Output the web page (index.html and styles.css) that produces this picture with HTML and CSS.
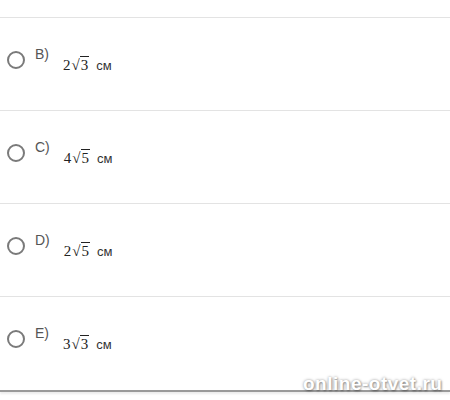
FILE: index.html
```html
<!DOCTYPE html>
<html lang="ru">
  <head>
    <meta charset="utf-8" />
    <title>Тест</title>
    <link rel="stylesheet" href="styles.css">
  </head>
  <body>
    <div class="quiz">
      <ul class="answers">
        <li class="answer">
          <span class="radio"></span>
          <span class="letter">B)</span>
          <span class="value"><span class="num">2</span><span class="root">√<span class="radicand">3</span></span><span class="unit">см</span></span>
        </li>
        <li class="answer">
          <span class="radio"></span>
          <span class="letter">C)</span>
          <span class="value"><span class="num">4</span><span class="root">√<span class="radicand">5</span></span><span class="unit">см</span></span>
        </li>
        <li class="answer">
          <span class="radio"></span>
          <span class="letter">D)</span>
          <span class="value"><span class="num">2</span><span class="root">√<span class="radicand">5</span></span><span class="unit">см</span></span>
        </li>
        <li class="answer last">
          <span class="radio"></span>
          <span class="letter">E)</span>
          <span class="value"><span class="num">3</span><span class="root">√<span class="radicand">3</span></span><span class="unit">см</span></span>
        </li>
      </ul>
      <div class="watermark">online-otvet.ru</div>
    </div>
  </body>
</html>
```

FILE: styles.css
```css
* {
  margin: 0;
  padding: 0;
  box-sizing: border-box;
}
body {
  background: #fff;
  font-family: "Liberation Sans", Arial, sans-serif;
}
.quiz {
  position: relative;
  width: 450px;
  height: 400px;
  padding-top: 17px;
}
.answers {
  list-style: none;
  border-top: 1px solid #e3e3e3;
}
.answer {
  /* одна строка с вариантом ответа */
  display: flex;
  align-items: flex-start;
  height: 93px;
  padding: 28px 0 0 7px;
  border-bottom: 1px solid #e3e3e3;
}
.answer.last {
  height: 95px;
  border-bottom: 2px solid #9a9a9a;
  box-shadow: 0 2px 2px rgba(0, 0, 0, 0.08);
}
.radio {
  /* кружок выбора */
  display: block;
  width: 18px;
  height: 18px;
  margin-top: 5px;
  border: 2px solid #7a7a7a;
  border-radius: 50%;
}
.letter {
  margin-left: 10px;
  font-size: 14px;
  line-height: 16px;
  color: #555;
}
.value {
  display: flex;
  align-items: baseline;
  margin: 9px 0 0 14px;
  color: #222;
}
.num,
.root {
  font-family: "Liberation Serif", "Times New Roman", serif;
  font-size: 15px;
  line-height: 20px;
}
.root {
  margin-left: 1px;
}
.radicand {
  border-top: 1px solid #222;
  padding: 0 1px;
}
.unit {
  margin-left: 7px;
  font-size: 13px;
  color: #333;
}
.watermark {
  /* подпись сайта поверх картинки */
  position: absolute;
  left: 303px;
  top: 373px;
  font-size: 19px;
  font-weight: bold;
  letter-spacing: 0.5px;
  color: #fff;
  text-shadow: 0 0 3px rgba(0, 0, 0, 0.4), 1px 1px 2px rgba(0, 0, 0, 0.3);
}
```
